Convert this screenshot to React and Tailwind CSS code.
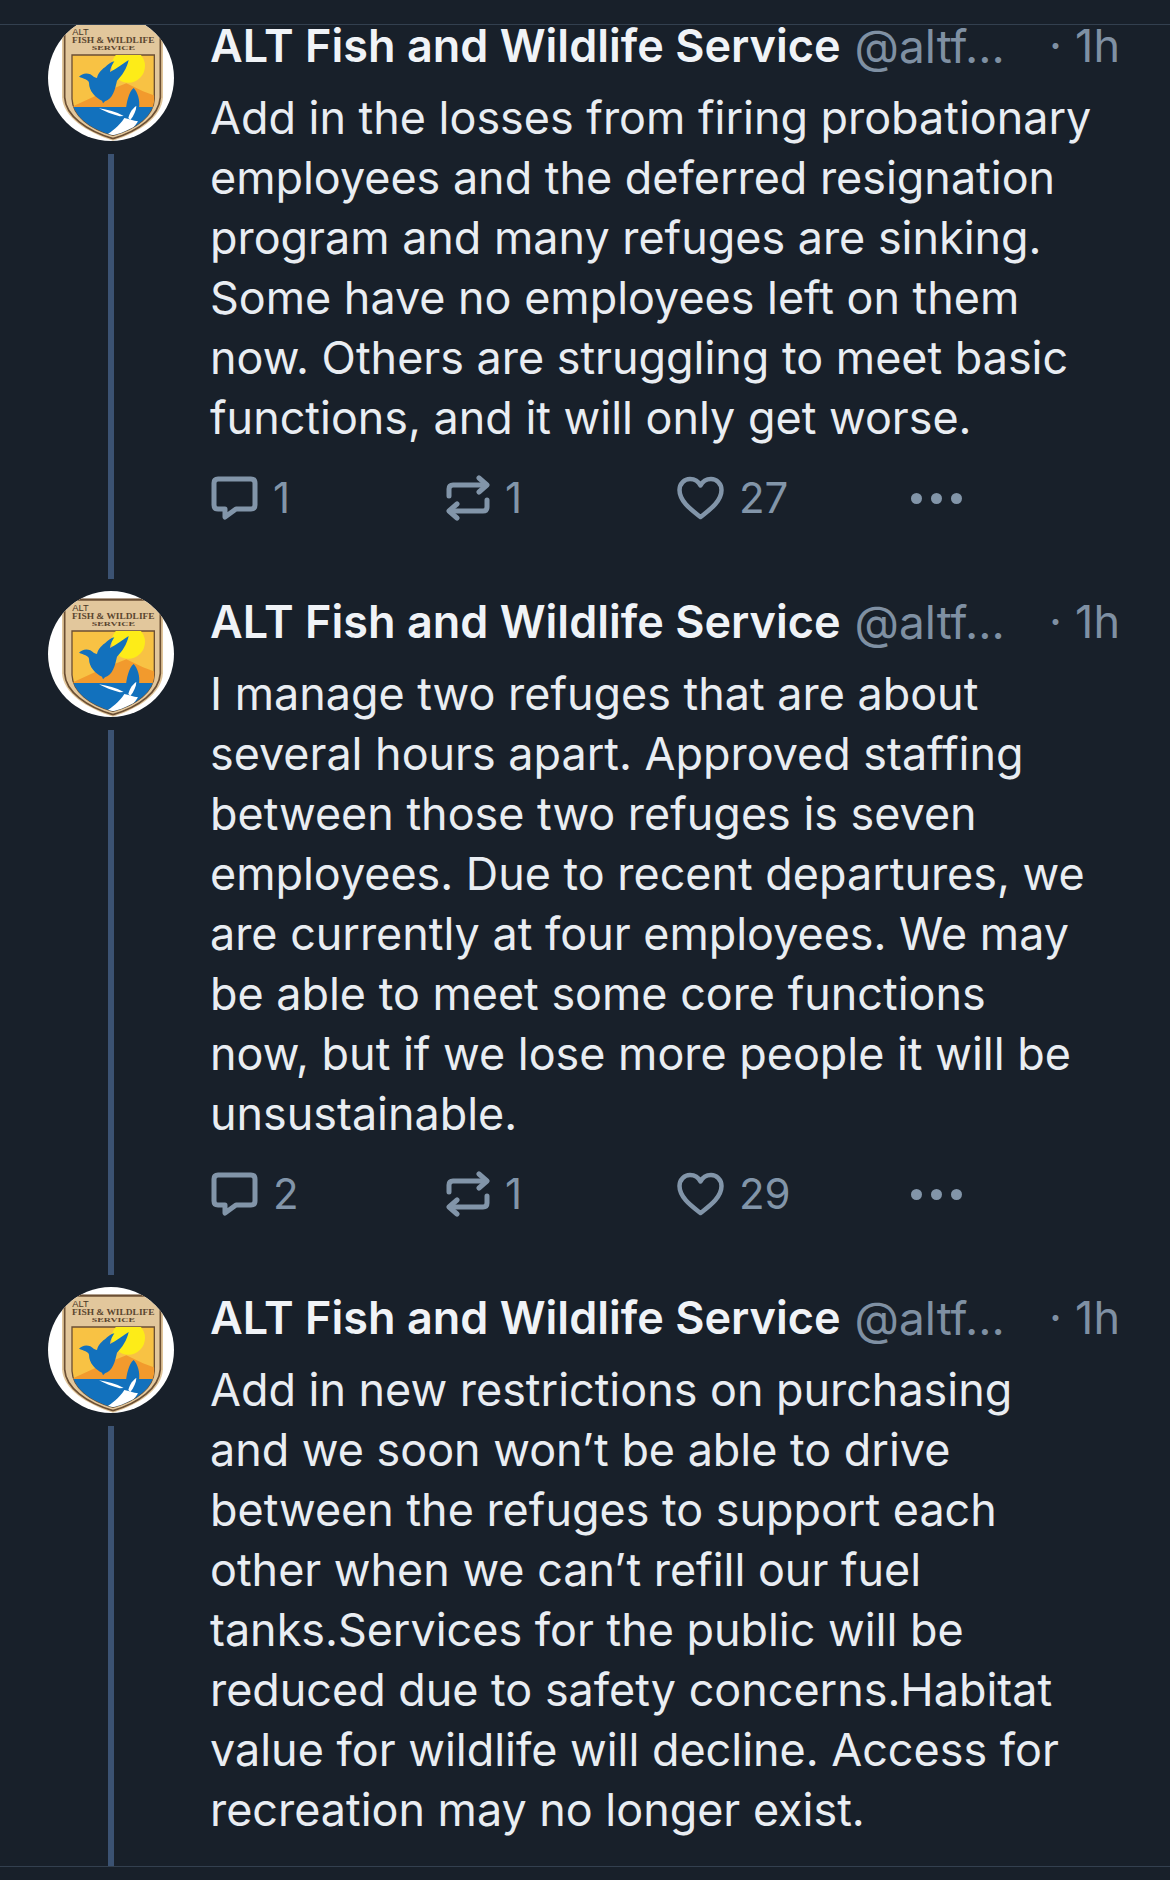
const posts = [
  {
    text: "Add in the losses from firing probationary employees and the deferred resignation program and many refuges are sinking. Some have no employees left on them now. Others are struggling to meet basic functions, and it will only get worse.",
    replies: 1,
    reposts: 1,
    likes: 27,
  },
  {
    text: "I manage two refuges that are about several hours apart. Approved staffing between those two refuges is seven employees. Due to recent departures, we are currently at four employees. We may be able to meet some core functions now, but if we lose more people it will be unsustainable.",
    replies: 2,
    reposts: 1,
    likes: 29,
  },
  {
    text: "Add in new restrictions on purchasing and we soon won’t be able to drive between the refuges to support each other when we can’t refill our fuel tanks.Services for the public will be reduced due to safety concerns.Habitat value for wildlife will decline. Access for recreation may no longer exist.",
  },
];

function Avatar({ id }) {
  const clip = `avatar-${id}`;
  const panel = `panel-${id}`;
  return (
    <svg className="h-[126px] w-[126px] shrink-0" viewBox="55 33 378 378">
      <defs>
        <clipPath id={clip}>
          <circle cx="244" cy="222" r="189" />
        </clipPath>
        <clipPath id={panel}>
          <path d="M127 153H374V285C372 335 320 375 250 394C180 375 129 335 127 285Z" />
        </clipPath>
      </defs>
      <g clipPath={`url(#${clip})`}>
        <rect x="55" y="33" width="378" height="378" fill="#fff" />
        <path d="M97 56H400V280C396 340 330 385 250 410C170 385 101 340 97 280Z" fill="#e2c79c" />
        <path d="M105 58V280C108 335 170 380 250 404" fill="none" stroke="#6b4f34" strokeWidth="5" />
        <path d="M392 58V280C388 335 330 380 250 404" fill="none" stroke="#6b4f34" strokeWidth="5" />
        <path d="M97 59H400" stroke="#6b4f34" strokeWidth="7" />
        <text x="128" y="94" fontFamily="Liberation Sans, sans-serif" fontSize="28" fill="#4a3a28">ALT</text>
        <text x="251" y="118" textAnchor="middle" fontFamily="Liberation Serif, serif" fontSize="22" fontWeight="700" textLength="248" lengthAdjust="spacingAndGlyphs" fill="#5a452f">FISH &amp; WILDLIFE</text>
        <text x="251" y="139" textAnchor="middle" fontFamily="Liberation Serif, serif" fontSize="21" fontWeight="700" textLength="130" lengthAdjust="spacingAndGlyphs" fill="#5a452f">SERVICE</text>
        <path d="M127 153H374V285C372 335 320 375 250 394C180 375 129 335 127 285Z" fill="#f8c244" stroke="#6b4f34" strokeWidth="4" />
        <g clipPath={`url(#${panel})`}>
          <circle cx="296" cy="186" r="50" fill="#fdec18" />
          <path d="M130 307L215 268L290 238L340 262L376 275V312H130Z" fill="#f29a2d" />
          <rect x="125" y="309" width="252" height="90" fill="#1271bd" />
          <path d="M208 313C235 317 258 323 282 336L270 337C246 330 226 323 208 313Z" fill="#fff" />
          <path d="M225 398C245 382 268 368 284 342C296 345 312 350 325 352C318 365 302 380 286 398Z" fill="#fff" />
          <path d="M288 325C290 295 298 262 312 252C324 264 332 290 328 312C322 325 310 335 302 345C296 340 290 335 288 325Z" fill="#1271bd" />
          <path d="M296 342C300 325 310 312 320 306C320 320 312 335 302 348Z" fill="#fff" />
          <path d="M148 218C156 209 170 205 182 211C190 216 194 222 202 222C204 210 216 196 226 190C234 182 244 174 254 172C248 182 242 192 241 204C260 194 282 178 297 168C292 192 278 214 262 230C256 256 250 284 226 292L220 298L217 290C198 280 178 262 178 236C176 226 162 224 148 218Z" fill="#1271bd" />
        </g>
      </g>
    </svg>
  );
}

function ReplyIcon() {
  return (
    <svg className="h-[45px] w-[47px]" viewBox="0 0 47 45" fill="none" stroke="currentColor" strokeWidth="5" strokeLinejoin="round" strokeLinecap="round">
      <path d="M7 3H40C42.5 3 44 4.5 44 7V29C44 31.5 42.5 33 40 33H25L14 41V33H7C4.5 33 3 31.5 3 29V7C3 4.5 4.5 3 7 3Z" />
    </svg>
  );
}

function RepostIcon() {
  return (
    <svg className="h-[46px] w-[44px]" viewBox="0 0 44 46" fill="none" stroke="currentColor" strokeWidth="5" strokeLinejoin="round" strokeLinecap="round">
      <path d="M3 21V14C3 11.5 4.5 10 7 10H40" />
      <path d="M33 3L41 10L33 17" />
      <path d="M41 25V32C41 34.5 39.5 36 37 36H4" />
      <path d="M11 29L3 36L11 43" />
    </svg>
  );
}

function HeartIcon() {
  return (
    <svg className="h-[44px] w-[47px]" viewBox="0 0 47 44" fill="none" stroke="currentColor" strokeWidth="4.5" strokeLinejoin="round">
      <path d="M23.5 41C16 35 2.5 26 2.5 14C2.5 7.5 7.5 3 13 3C17.5 3 21.5 5.5 23.5 9.5C25.5 5.5 29.5 3 34 3C39.5 3 44.5 7.5 44.5 14C44.5 26 31 35 23.5 41Z" />
    </svg>
  );
}

function Action({ icon, count, width }) {
  return (
    <div className={`flex items-center gap-[15px] ${width}`}>
      {icon}
      <span className="text-[42px] leading-[60px] font-normal">{count}</span>
    </div>
  );
}

function Post({ id, text, replies, reposts, likes, last }) {
  return (
    <article className={`flex ${last ? "h-[579px]" : ""}`}>
      <div className="flex w-[211px] shrink-0 flex-col items-start pl-12">
        <Avatar id={id} />
        <div className={`mt-[13px] ml-[60px] w-1.5 flex-1 bg-[#3b5272] ${last ? "" : "mb-3"}`} />
      </div>
      <div className={`w-[909px] min-w-0 pt-px ${last ? "" : "pb-[63px]"}`}>
        <div className="flex h-[60px] items-center text-[45px] leading-[60px]">
          <span className="-ml-px font-semibold whitespace-nowrap text-[#f0f3f7]">ALT Fish and Wildlife Service</span>
          <span className="ml-[14px] w-[197px] text-[46px] whitespace-nowrap text-[#7f90a3]">@altf...</span>
          <span className="text-[#7f90a3]">·</span>
          <span className="ml-[13px] text-[#7f90a3]">1h</span>
        </div>
        <p className="-ml-px mt-3 w-[883px] text-[44.9px] leading-[60px] text-[#e9edf2]">{text}</p>
        {likes !== undefined && (
          <div className="mt-5 flex h-[60px] items-center text-[#8295a9]">
            <Action icon={<ReplyIcon />} count={replies} width="w-[235px]" />
            <Action icon={<RepostIcon />} count={reposts} width="w-[231px]" />
            <Action icon={<HeartIcon />} count={likes} width="w-[234px]" />
            <div className="flex items-center gap-[9px]">
              <span className="h-[11px] w-[11px] rounded-full bg-[#8295a9]" />
              <span className="h-[11px] w-[11px] rounded-full bg-[#8295a9]" />
              <span className="h-[11px] w-[11px] rounded-full bg-[#8295a9]" />
            </div>
          </div>
        )}
      </div>
    </article>
  );
}

export default function App() {
  return (
    <div className="h-[1880px] w-[1170px] overflow-hidden bg-[#18202a] font-['Inter',sans-serif]">
      <div className="h-[25px] border-b border-[#33404f]" />
      <div className="h-[1842px] overflow-hidden border-b border-[#33404f]">
        <div className="-mt-[10px]">
          {posts.map((post, i) => (
            <Post key={i} id={i} last={i === posts.length - 1} {...post} />
          ))}
        </div>
      </div>
    </div>
  );
}
